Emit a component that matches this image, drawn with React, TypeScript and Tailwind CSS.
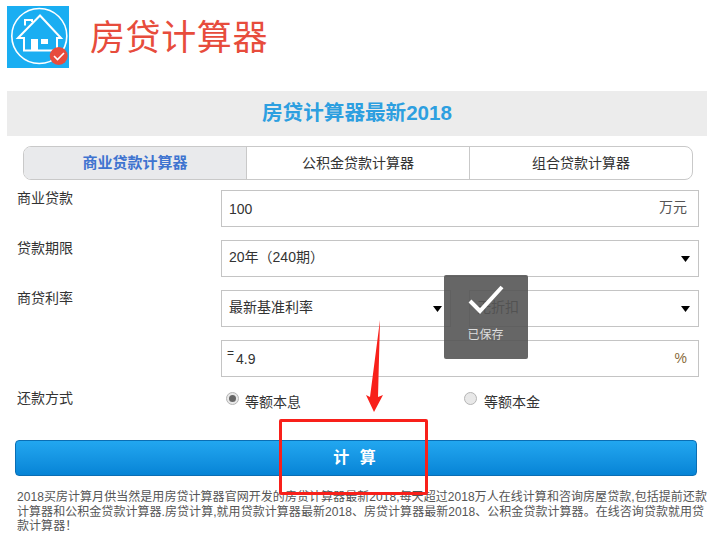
const font = { fontFamily: '"Liberation Sans", "Noto Sans CJK SC", sans-serif' };

function Logo() {
  return (
    <svg width="62" height="62" viewBox="0 0 62 62" className="shrink-0">
      <rect width="62" height="62" fill="#1aaef2" />
      <circle cx="32.3" cy="30" r="27.5" fill="none" stroke="#fff" strokeWidth="1.6" />
      <path
        d="M11 32 L33 9.5 L54 32 L50 32 L50 44.5 L17 44.5 L17 32 Z M18 19.5 L18 14 L25 14 L25 16"
        fill="none"
        stroke="#fff"
        strokeWidth="2"
      />
      <rect x="24" y="33" width="7" height="12" fill="#fff" />
      <rect x="34" y="33" width="7" height="5" fill="#fff" />
      <circle cx="51.7" cy="50" r="9" fill="#e74c3c" />
      <path d="M47 50 L50.5 53.5 L57 47" fill="none" stroke="#fff" strokeWidth="1.6" />
    </svg>
  );
}

function Caret() {
  return (
    <svg width="9" height="6" viewBox="0 0 9 6" className="shrink-0">
      <path d="M0 0 H9 L4.5 6 Z" fill="#000" />
    </svg>
  );
}

function Row({ label, children }: { label?: string; children: React.ReactNode }) {
  return (
    <div className="flex">
      <div className="-mt-[1px] w-[206px] shrink-0 pl-[2px] text-sm leading-[18px] text-[#333]">{label}</div>
      <div className="flex-1">{children}</div>
    </div>
  );
}

function Box({ children, className = "" }: { children: React.ReactNode; className?: string }) {
  return (
    <div className={`flex h-[37px] items-center justify-between border border-[#c4c4c4] bg-white pl-[7px] pr-[8px] text-sm text-[#333] ${className}`}>
      {children}
    </div>
  );
}

export default function App() {
  return (
    <div className="relative h-[544px] w-[709px] overflow-hidden bg-white" style={font}>
      <header className="flex h-[91px] items-start gap-[21px] pl-[7px] pt-[6px]">
        <Logo />
        <h1 className="pt-[9px] text-[35px] leading-[46px] tracking-[0.6px] text-[#e74c3c]">房贷计算器</h1>
      </header>

      <div className="ml-[7px] flex h-[45px] w-[700px] items-center justify-center bg-[#ececec] text-[20.6px] font-bold text-[#2d9fe0]">
        房贷计算器最新2018
      </div>

      <div className="ml-[23px] mt-[10px] flex h-[34px] w-[670px] overflow-hidden rounded-[8px] border border-[#c9c9c9] text-sm text-[#333]">
        <div className="flex w-[223px] items-center justify-center border-r border-[#c9c9c9] bg-[#e9eaec] text-[15px] font-bold text-[#3f74d0]">
          商业贷款计算器
        </div>
        <div className="flex w-[223px] items-center justify-center border-r border-[#c9c9c9]">公积金贷款计算器</div>
        <div className="flex flex-1 items-center justify-center">组合贷款计算器</div>
      </div>

      <div className="ml-[15px] mr-[10px] mt-[10px] flex flex-col gap-[13px]">
        <Row label="商业贷款">
          <Box>
            <span>100</span>
            <span className="-mt-[4px] mr-[3px] text-[#555]">万元</span>
          </Box>
        </Row>
        <Row label="贷款期限">
          <Box>
            <span className="mb-[4px]">20年（240期）</span>
            <Caret />
          </Box>
        </Row>
        <Row label="商贷利率">
          <div className="flex gap-[18px]">
            <Box className="flex-1">
              <span className="mb-[4px]">最新基准利率</span>
              <Caret />
            </Box>
            <Box className="flex-1">
              <span className="mb-[4px]">无折扣</span>
              <Caret />
            </Box>
          </div>
        </Row>
        <Row>
          <Box>
            <span className="flex items-start">
              <span className="-ml-[2px] -mt-[2px] mr-[2px] text-xs leading-[12px]">=</span>
              <span>4.9</span>
            </span>
            <span className="-mt-[1px] mr-[3px] text-[#8a6a3a]">%</span>
          </Box>
        </Row>
      </div>

      <div className="ml-[15px] mt-[10px] flex h-[24px] text-sm text-[#333]">
        <div className="w-[2px]" />
        <div className="h-[18px] w-[209px] translate-y-[1px]">还款方式</div>
        <div className="flex w-[238px] items-start gap-[6px] pt-[5px]">
          <span className="flex h-[13px] w-[13px] shrink-0 items-center justify-center rounded-full border border-[#b5b5b5] bg-[#e8e8e8]">
            <span className="h-[7px] w-[7px] rounded-full bg-[#666]" />
          </span>
          <span className="leading-[20px]">等额本息</span>
        </div>
        <div className="flex items-start gap-[7px] pt-[5px]">
          <span className="h-[13px] w-[13px] shrink-0 rounded-full border border-[#b5b5b5] bg-[#e8e8e8]" />
          <span className="leading-[20px]">等额本金</span>
        </div>
      </div>

      <button className="ml-[15px] mt-[29px] flex h-[36px] w-[682px] items-center justify-center rounded-[4px] border border-[#0a6eb4] bg-gradient-to-b from-[#22a7f0] to-[#0684d6] text-base font-bold tracking-[3px] text-white">
        计 算
      </button>

      <p className="ml-[17px] mr-[2px] mt-[14px] text-xs leading-[14.5px] tracking-[0.05px] text-[#555]">
        2018买房计算月供当然是用房贷计算器官网开发的房贷计算器最新2018,每天超过2018万人在线计算和咨询房屋贷款,包括提前还款计算器和公积金贷款计算器.房贷计算,就用贷款计算器最新2018、房贷计算器最新2018、公积金贷款计算器。在线咨询贷款就用贷款计算器！
      </p>

      {/* saved toast */}
      <div className="absolute left-[444px] top-[275px] flex h-[84px] w-[84px] flex-col items-center rounded-[2px] bg-[#555]/90 pt-[10px] text-xs text-[#ddd]">
        <svg width="36" height="30" viewBox="0 0 36 30">
          <path d="M2 16 L12 26 L34 2" fill="none" stroke="#fff" strokeWidth="4" />
        </svg>
        <span className="mt-[12px] -ml-[1px]">已保存</span>
      </div>

      {/* annotation */}
      <div className="absolute left-[279px] top-[419px] h-[76px] w-[149px] rounded-[2px] border-[3px] border-[#f8201a]" />
      <svg className="absolute left-[360px] top-[318px]" width="30" height="96" viewBox="0 0 30 96">
        <path d="M20 2 L18 79 L23 77 L14 94 L6 77 L10 79 Z" fill="#f8201a" />
      </svg>
    </div>
  );
}
